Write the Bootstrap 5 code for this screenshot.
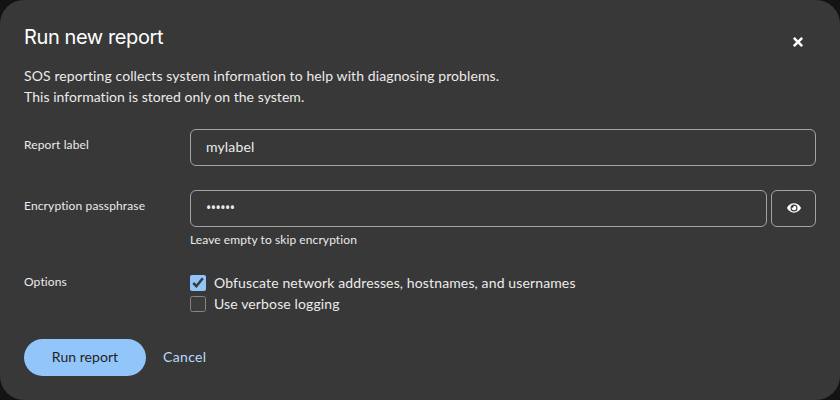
<!DOCTYPE html>
<html lang="en" data-bs-theme="dark">
<head>
<meta charset="utf-8">
<meta name="viewport" content="width=device-width, initial-scale=1">
<title>Run new report</title>
<link href="https://cdn.jsdelivr.net/npm/bootstrap@5.3.0/dist/css/bootstrap.min.css" rel="stylesheet">
<style>
  body { background: #131313; color: #ebebeb; font: 14px/21px Lato, sans-serif; letter-spacing: .13px; overflow: hidden; }
  .report-dialog { height: 400px; background: #383838; border-radius: 24px; padding: 24px; color-scheme: dark; }
  .dialog-title { font: 400 20px/26px Inter, sans-serif; letter-spacing: -.4px; color: #fff; }
  .close-button { width: 37px; height: 37px; margin-top: -1px; }
  .intro { margin-top: 5px; letter-spacing: .1px; }
  .intro span { letter-spacing: .04px; }
  .field-name { width: 166px; font-size: 12px; line-height: 18px; padding-top: 7px; }
  .report-dialog .form-control { height: 37px; padding: 0 15px 2px; font-size: 14px; letter-spacing: .15px; color: #ebebeb; background: transparent; border: 1px solid #a3a3a3; border-radius: 6px; }
  .report-dialog input[type=password] { font-family: "Noto Sans", sans-serif; letter-spacing: -.5px; }
  .reveal { width: 45px; height: 37px; border: 1px solid #a3a3a3; border-radius: 6px; }
  .reveal svg { margin-bottom: 2px; }
  .helper { font-size: 12px; line-height: 18px; margin-top: 4px; letter-spacing: .09px; }
  .options { margin-top: -1px; }
  .option input { width: 16px; height: 16px; margin: 0; accent-color: #92c5f9; }
  .run { width: 122px; height: 37px; font-size: 14px; letter-spacing: .05px; background: #92c5f9; color: #1f1f1f; }
  .cancel { font-size: 14px; letter-spacing: .35px; color: #b9dafc; margin-left: 17px; }
  .run span, .cancel span { display: block; padding-bottom: 2px; }
  .fields { margin-top: 22px; }
</style>
</head>
<body>
<main class="report-dialog d-flex flex-column">
  <header class="d-flex justify-content-between">
    <h1 class="dialog-title m-0">Run new report</h1>
    <button class="close-button btn p-0 border-0 d-flex align-items-center justify-content-center" aria-label="Close">
      <svg width="10" height="14" viewBox="0 0 352 512" fill="#fff"><path d="M242.72 256l100.07-100.07c12.28-12.28 12.28-32.19 0-44.48l-22.24-22.24c-12.28-12.28-32.19-12.28-44.48 0L176 189.28 75.93 89.21c-12.28-12.28-32.19-12.28-44.48 0L9.21 111.45c-12.28 12.28-12.28 32.19 0 44.48L109.28 256 9.21 356.07c-12.28 12.28-12.28 32.19 0 44.48l22.24 22.24c12.28 12.28 32.2 12.28 44.48 0L176 322.72l100.07 100.07c12.28 12.28 32.2 12.28 44.48 0l22.24-22.24c12.28-12.28 12.28-32.19 0-44.48L242.72 256z"/></svg>
    </button>
  </header>
  <p class="intro mb-0">SOS reporting collects system information to help with diagnosing problems.<br><span>This information is stored only on the system.</span></p>
  <form class="fields d-flex flex-column gap-4">
    <div class="d-flex">
      <label class="field-name flex-shrink-0" for="label">Report label</label>
      <input class="form-control" id="label" type="text" value="mylabel">
    </div>
    <div class="d-flex">
      <label class="field-name flex-shrink-0" for="pass">Encryption passphrase</label>
      <div class="flex-grow-1">
        <div class="d-flex gap-1">
          <input class="form-control" id="pass" type="password" value="secret">
          <button type="button" class="reveal btn p-0 flex-shrink-0 d-flex align-items-center justify-content-center" aria-label="Show passphrase">
            <svg width="14" height="14" viewBox="0 0 576 512" fill="#fff"><path d="M572.52 241.4C518.29 135.59 410.93 64 288 64S57.68 135.64 3.48 241.41a32.35 32.35 0 0 0 0 29.19C57.71 376.41 165.07 448 288 448s230.32-71.64 284.52-177.41a32.35 32.35 0 0 0 0-29.19zM288 400a144 144 0 1 1 144-144 143.93 143.93 0 0 1-144 144zm0-240a95.31 95.31 0 0 0-25.31 3.79 47.85 47.85 0 0 1-66.9 66.9A95.78 95.78 0 1 0 288 160z"/></svg>
          </button>
        </div>
        <div class="helper">Leave empty to skip encryption</div>
      </div>
    </div>
    <div class="d-flex">
      <div class="field-name flex-shrink-0 pt-0">Options</div>
      <div class="options">
        <label class="option d-flex align-items-center gap-2"><input type="checkbox" checked><span>Obfuscate network addresses, hostnames, and usernames</span></label>
        <label class="option d-flex align-items-center gap-2"><input type="checkbox"><span>Use verbose logging</span></label>
      </div>
    </div>
  </form>
  <footer class="d-flex align-items-center mt-auto">
    <button class="run btn p-0 border-0 rounded-pill"><span>Run report</span></button>
    <button class="cancel btn p-0 border-0"><span>Cancel</span></button>
  </footer>
</main>
<script src="https://cdn.jsdelivr.net/npm/bootstrap@5.3.0/dist/js/bootstrap.bundle.min.js"></script>
</body>
</html>
